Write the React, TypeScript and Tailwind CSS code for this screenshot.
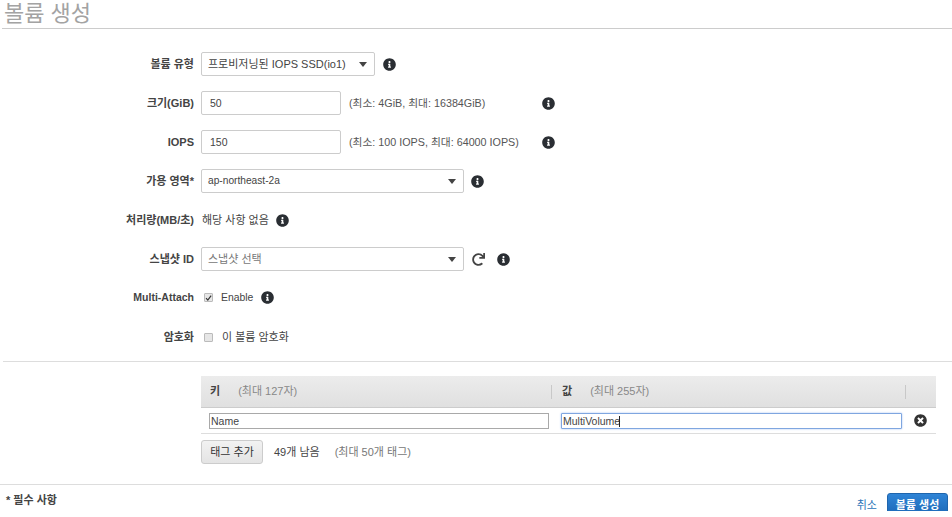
import React from 'react';
import { FaInfoCircle, FaRedo, FaTimesCircle } from 'react-icons/fa';

const font = "font-['Liberation_Sans','Noto_Sans_CJK_KR',sans-serif]";

function Info({ className = '' }: { className?: string }) {
  return <FaInfoCircle className={`size-[13px] shrink-0 text-[#2a2e33] ${className}`} />;
}

function Row({ label, children, latin }: { label: string; children: React.ReactNode; latin?: boolean }) {
  return (
    <div className="flex h-[24px] items-center mb-[15px]">
      <div className={`w-[194px] shrink-0 text-right font-bold text-[#444] ${latin ? 'text-[10.5px]' : 'text-[11px]'}`}>{label}</div>
      <div className="ml-[7px] flex items-center">{children}</div>
    </div>
  );
}

function Select({ value, width, muted, latin }: { value: string; width: string; muted?: boolean; latin?: boolean }) {
  return (
    <div className={`flex h-[24px] items-center justify-between rounded-[2px] border border-[#ccc] bg-white pl-[6px] pr-[6px] ${width}`}>
      <span className={`${latin ? 'text-[10.2px]' : 'text-[11px]'} ${muted ? 'text-[#777]' : 'text-[#444]'}`}>{value}</span>
      <span className="mr-[1px] h-0 w-0 border-x-[4.5px] border-t-[5px] border-x-transparent border-t-[#444]" />
    </div>
  );
}

function TextInput({ value }: { value: string }) {
  return (
    <input
      readOnly
      value={value}
      className="h-[24px] w-[140px] rounded-[2px] border border-[#ccc] bg-white px-[8px] text-[10.5px] text-[#444] outline-none"
    />
  );
}

function Check({ checked }: { checked?: boolean }) {
  return (
    <span className="ml-[3px] flex size-[9px] items-center justify-center rounded-[1px] border border-[#bbb] bg-[#e6e6e6]">
      {checked && (
        <svg viewBox="0 0 10 10" className="size-[8px]">
          <path d="M1.5 5.2 L4 8 L8.8 1.6" fill="none" stroke="#333" strokeWidth="1.7" />
        </svg>
      )}
    </span>
  );
}

export default function App() {
  return (
    <div className={`h-[511px] w-[952px] overflow-hidden bg-white ${font}`}>
      <div className="ml-[2px] h-[29px] border-b border-[#ccc] pl-[2px]">
        <h1 className="text-[22px] leading-[27px] text-[#a3a3a3]">볼륨 생성</h1>
      </div>

      <div className="pt-[23px]">
        <Row label="볼륨 유형">
          <Select value="프로비저닝된 IOPS SSD(io1)" width="w-[174px]" />
          <Info className="ml-[8px]" />
        </Row>
        <Row label="크기(GiB)">
          <TextInput value="50" />
          <span className="ml-[8px] w-[193px] text-[10.75px] text-[#555]">(최소: 4GiB, 최대: 16384GiB)</span>
          <Info />
        </Row>
        <Row label="IOPS">
          <TextInput value="150" />
          <span className="ml-[8px] w-[193px] text-[10.75px] text-[#555]">(최소: 100 IOPS, 최대: 64000 IOPS)</span>
          <Info />
        </Row>
        <Row label="가용 영역*">
          <Select value="ap-northeast-2a" width="w-[263px]" latin />
          <Info className="ml-[7px]" />
        </Row>
        <Row label="처리량(MB/초)">
          <span className="ml-[1px] text-[11px] text-[#444]">해당 사항 없음</span>
          <Info className="ml-[7px]" />
        </Row>
        <Row label="스냅샷 ID">
          <Select value="스냅샷 선택" width="w-[263px]" muted />
          <FaRedo className="ml-[8px] size-[13px] text-[#444]" />
          <Info className="ml-[12px]" />
        </Row>
        <Row label="Multi-Attach" latin>
          <Check checked />
          <span className="ml-[8px] text-[10.4px] text-[#444]">Enable</span>
          <Info className="ml-[8px]" />
        </Row>
        <Row label="암호화">
          <Check />
          <span className="ml-[9px] text-[11px] text-[#444]">이 볼륨 암호화</span>
        </Row>
      </div>

      <div className="ml-[3px] mt-[-3px] border-t border-[#ddd] pt-[14px]">
        <div className="ml-[198px] w-[735px]">
          <div className="flex h-[32px] items-center border-b border-[#ccc] bg-gradient-to-b from-[#ececec] to-[#e0e0e0] text-[11px]">
            <div className="flex h-[14px] w-[351px] items-center border-r border-[#c8c8c8] pl-[9px]">
              <span className="font-bold text-[#444]">키</span>
              <span className="ml-[18px] text-[#888]">(최대 127자)</span>
            </div>
            <div className="flex h-[14px] w-[354px] items-center border-r border-[#c8c8c8] pl-[10px]">
              <span className="font-bold text-[#444]">값</span>
              <span className="ml-[18px] text-[#888]">(최대 255자)</span>
            </div>
          </div>
          <div className="flex h-[26px] items-center border-b border-[#ddd] pl-[8px]">
            <input
              readOnly
              value="Name"
              className="h-[16px] w-[340px] border border-[#a9a9a9] bg-white px-[1px] text-[10.5px] text-[#444] outline-none"
            />
            <div className="relative ml-[12px] h-[16px] w-[341px]">
              <input
                readOnly
                value="MultiVolume"
                className="block h-full w-full rounded-[1px] border border-[#7fa6e0] bg-white px-[1px] text-[10.5px] text-[#444] outline-none shadow-[0_0_2px_#9dbcf0]"
              />
              <span className="absolute left-[58px] top-[3px] h-[11px] w-px bg-[#222]" />
            </div>
            <FaTimesCircle className="ml-[12px] size-[13px] text-[#333]" />
          </div>
          <div className="mt-[6px] flex items-center">
            <button className="h-[24px] w-[62px] rounded-[3px] border border-[#ccc] bg-gradient-to-b from-[#f2f2f2] to-[#e4e4e4] text-[11px] text-[#333]">
              태그 추가
            </button>
            <span className="ml-[11px] text-[11px] text-[#444]">49개 남음</span>
            <span className="ml-[15px] text-[11px] text-[#777]">(최대 50개 태그)</span>
          </div>
        </div>
      </div>

      <div className="mt-[20px] flex h-[40px] items-start justify-between border-t border-[#ddd]">
        <span className="ml-[6px] mt-[7px] text-[11px] font-bold text-[#444]">* 필수 사항</span>
        <div className="mr-[4px] mt-[8px] flex items-center">
          <span className="text-[11px] text-[#2a73b8]">취소</span>
          <button className="ml-[10px] h-[24px] w-[61px] rounded-[3px] border border-[#1f65ad] bg-gradient-to-b from-[#2f84d6] to-[#1a67b5] text-[11px] font-bold text-white">
            볼륨 생성
          </button>
        </div>
      </div>
    </div>
  );
}
